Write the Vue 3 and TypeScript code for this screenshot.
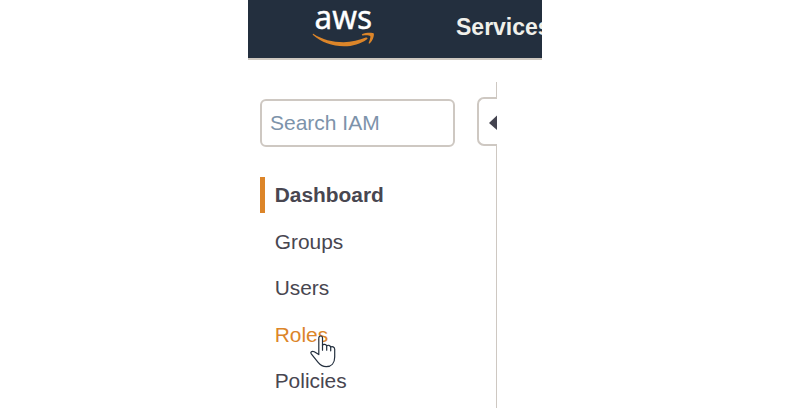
<script setup lang="ts">
import { ref } from 'vue'

interface NavItem {
  label: string
  active?: boolean
  hovered?: boolean
}

const query = ref<string>('')

const items: NavItem[] = [
  { label: 'Dashboard', active: true },
  { label: 'Groups' },
  { label: 'Users' },
  { label: 'Roles', hovered: true },
  { label: 'Policies' },
]
</script>

<template>
  <div class="page">
    <div class="console">
      <header class="topbar">
        <svg class="logo" width="64" height="48" viewBox="0 0 64 48" role="img">
          <text class="logo-text" x="2.5" y="29" textLength="57.5" lengthAdjust="spacingAndGlyphs">aws</text>
          <path
            class="smile"
            d="M1.6 34 C10 39.5 20.5 42.2 31.5 42.2 C39.5 42.2 47.5 40.3 53.8 37.6 C55.2 37 56.2 38.3 55 39.2 C48.8 43.8 40.5 46.3 32 46.3 C20 46.3 9.2 42.2 1 35 C.4 34.4 .9 33.5 1.6 34Z"
          />
          <path
            class="smile"
            d="M50.4 34.1 C53 32.7 60.6 32.4 61.7 33.5 C62.5 35 61 40.6 57.7 43.4 C57.1 43.8 56.4 43.5 56.7 42.8 C57.6 40.5 58.8 37 58.2 36 C57.5 35 53.5 35.1 50.8 35.4 C49.8 35.5 49.5 34.6 50.4 34.1Z"
          />
        </svg>
        <span class="services">Services</span>
      </header>

      <div class="body">
        <aside class="sidebar">
          <input v-model="query" class="search" type="text" placeholder="Search IAM" />
          <nav class="nav">
            <a
              v-for="item in items"
              :key="item.label"
              class="nav-item"
              :class="{ active: item.active, hovered: item.hovered }"
            >
              {{ item.label }}
              <svg v-if="item.hovered" class="cursor" width="27" height="34" viewBox="0 0 27 34">
                <path
                  d="M8.8 19.6 V3 C8.8 .3 12.5 .3 12.5 3 V10.3 C13.2 8.9 16 9.2 16.7 10.9 C17.7 9.7 20.2 10.3 20.7 12 C22 11.1 24.7 11.8 24.7 14.2 V22 C24.7 28 21.4 31.6 16.3 31.6 C12.7 31.6 10.7 30.5 8.1 27.3 C5.7 24.3 3.4 21.5 1.3 18.8 C.1 17 1.8 15.6 4.3 16.7 Z"
                />
                <path class="fingers" d="M12.5 9.8 V15.2 M16.7 10.9 V15.2 M20.7 12 V15.8" />
              </svg>
            </a>
          </nav>
        </aside>
        <div class="divider">
          <div class="rail rail-top"></div>
          <button class="collapse" type="button">
            <svg width="8" height="16" viewBox="0 0 8 16">
              <path d="M0 9 L8 1.5 V16 Z" />
            </svg>
          </button>
          <div class="rail rail-bottom"></div>
        </div>
      </div>
    </div>
  </div>
</template>

<style>
body {
  background: #fff;
}
</style>

<style scoped>
.page {
  width: 789px;
  height: 408px;
  overflow: hidden;
  font-family: 'Liberation Sans', Arial, sans-serif;
}

.console {
  display: flex;
  flex-direction: column;
  width: 294px;
  height: 408px;
  margin-left: 248px;
  overflow: hidden;
}

.topbar {
  display: flex;
  flex: none;
  box-sizing: border-box;
  height: 60px;
  padding-left: 64px;
  overflow: hidden;
  background: #232f3e;
  border-bottom: 2px solid #cec8c0;
}

.logo {
  flex: none;
  overflow: visible;
}

.logo-text {
  font-family: 'Noto Sans', 'Open Sans', sans-serif;
  font-size: 33px;
  font-weight: 400;
  fill: #fff;
  stroke: #fff;
  stroke-width: 0.4;
}

.smile {
  fill: #dc8529;
}

.services {
  flex: none;
  margin-left: 80px;
  padding-top: 14px;
  color: #f0f0ea;
  font-size: 23px;
  font-weight: 700;
  line-height: 26px;
}

.body {
  display: flex;
  flex: 1;
}

.sidebar {
  box-sizing: border-box;
  width: 229px;
  padding: 39px 0 0 12px;
}

.search {
  display: block;
  box-sizing: border-box;
  width: 195px;
  height: 48px;
  padding: 0 8px;
  color: #444450;
  font: 21px 'Liberation Sans', Arial, sans-serif;
  background: #fff;
  border: 2px solid #cec8c2;
  border-radius: 6px;
  outline: none;
}

.search::placeholder {
  color: #7d93aa;
  opacity: 1;
}

.nav {
  display: flex;
  flex-direction: column;
  gap: 10.5px;
  margin-top: 30px;
}

.nav-item {
  position: relative;
  box-sizing: border-box;
  height: 36px;
  padding-left: 9.7px;
  color: #484650;
  font-size: 20.9px;
  line-height: 36px;
  border-left: 5px solid transparent;
}

.nav-item.active {
  font-weight: 700;
  border-left-color: #dc8529;
}

.nav-item.hovered {
  color: #dc8529;
}

.cursor {
  position: absolute;
  top: 18px;
  left: 45px;
  fill: #fff;
  stroke: #232f3e;
  stroke-width: 1.2;
  stroke-linejoin: round;
}

.fingers {
  fill: none;
  stroke-linecap: round;
}

.divider {
  display: flex;
  flex-direction: column;
  align-items: flex-end;
  width: 20px;
  padding-top: 22px;
}

.rail {
  width: 1px;
  background: #cec8c2;
}

.rail-top {
  height: 15px;
}

.rail-bottom {
  flex: 1;
}

.collapse {
  display: flex;
  align-items: center;
  justify-content: flex-end;
  box-sizing: border-box;
  width: 20px;
  height: 49px;
  padding: 0 0 0 10px;
  background: #fff;
  border: 2px solid #cec8c2;
  border-right: 0;
  border-radius: 7px 0 0 7px;
}

.collapse svg {
  flex: none;
  fill: #444450;
}
</style>
